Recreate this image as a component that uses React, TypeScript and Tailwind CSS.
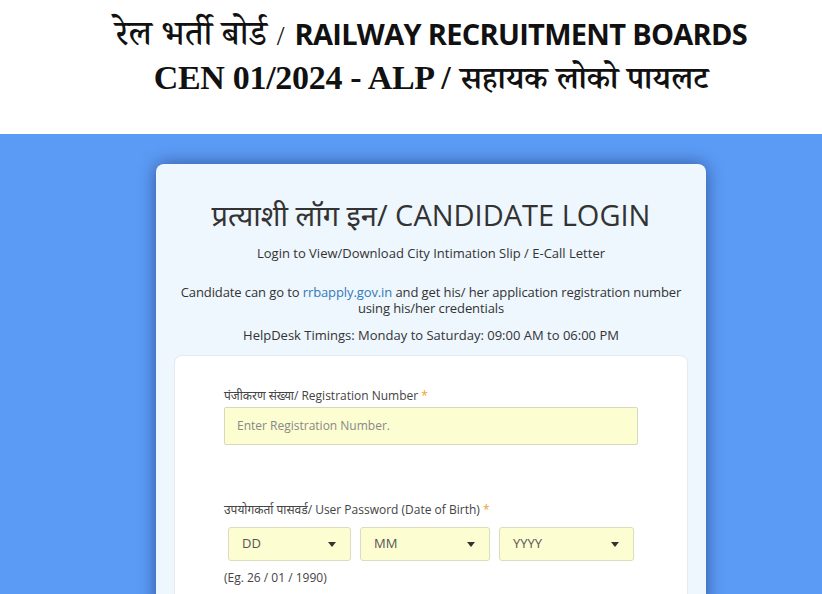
import React from "react";

const sans = "font-['Open_Sans','Noto_Sans','Noto_Sans_Devanagari',sans-serif]";

function Caret() {
  return (
    <svg width="8" height="5" viewBox="0 0 8 5" className="shrink-0">
      <path d="M0 0h8L4 5z" fill="#333" />
    </svg>
  );
}

function DateSelect({ label, width }: { label: string; width: string }) {
  return (
    <div
      className={`flex h-[34px] items-center justify-between rounded-[3px] border border-[#dcdcc0] bg-[#fdfdd2] pl-[13px] pr-[14px] text-[13px] text-[#555] ${width}`}
    >
      <span>{label}</span>
      <Caret />
    </div>
  );
}

export default function App() {
  return (
    <div className={`min-h-[594px] w-full bg-[#5b9bf6] ${sans}`}>
      {/* header banner */}
      <div className="flex h-[134px] flex-col items-center bg-white pl-10 pt-[14px] text-[#111]">
        <div className="flex items-baseline gap-[10px] leading-[40px]">
          <span className="font-['Noto_Serif_Devanagari','Noto_Sans_Devanagari',serif] text-[35px] font-medium">रेल भर्ती बोर्ड</span>
          <span className="font-['Liberation_Serif',serif] text-[28px]">/</span>
          <span className="font-['Open_Sans',sans-serif] text-[29px] font-bold tracking-[-0.7px]">RAILWAY RECRUITMENT BOARDS</span>
        </div>
        <div className="flex items-baseline gap-[10px] leading-[36px]">
          <span className="font-['Liberation_Serif',serif] text-[34px] font-bold tracking-[-0.3px]">CEN 01/2024 - ALP /</span>
          <span className="font-['Noto_Serif_Devanagari','Noto_Sans_Devanagari',serif] text-[32px] font-semibold">सहायक लोको पायलट</span>
        </div>
      </div>

      {/* login area */}
      <div className="flex justify-center pl-10 pt-[30px]">
        <div className="w-[550px] rounded-[8px] bg-[#eef6fe] px-[18px] pt-[29px] shadow-[0_0_18px_rgba(0,0,40,0.45)]">
          <h1 className="text-center text-[29px] leading-[44px] text-[#333]">प्रत्याशी लॉग इन/ CANDIDATE LOGIN</h1>
          <p className="mt-[7px] text-center text-[13px] leading-[18px] text-[#333]">
            Login to View/Download City Intimation Slip / E-Call Letter
          </p>
          <div className="-mx-[6px] mt-[22px] text-center text-[13px] leading-[16px] tracking-[-0.1px] text-[#333]">
            <p>
              Candidate can go to <a className="text-[#337ab7]">rrbapply.gov.in</a> and get his/ her application registration number
            </p>
            <p>using his/her credentials</p>
          </div>
          <p className="mt-[10px] text-center text-[13px] leading-[18px] text-[#333]">
            HelpDesk Timings: Monday to Saturday: 09:00 AM to 06:00 PM
          </p>

          <div className="mt-[11px] h-[260px] rounded-t-[8px] border border-[#e4eaf0] bg-white px-[49px] pt-[31px]">
            <label className="block text-[12px] leading-[18px] text-[#444]">
              पंजीकरण संख्या/ Registration Number <span className="text-[#f0a030]">*</span>
            </label>
            <div className="mt-[2px] flex h-[38px] items-center rounded-[2px] border border-[#d8d8bc] bg-[#fdfdd2] px-[12px] text-[12px] text-[#888]">
              Enter Registration Number.
            </div>

            <label className="mt-[56px] block text-[12px] leading-[18px] text-[#444]">
              उपयोगकर्ता पासवर्ड/ User Password (Date of Birth) <span className="text-[#f0a030]">*</span>
            </label>
            <div className="mt-[8px] flex gap-[9px] pl-[4px]">
              <DateSelect label="DD" width="w-[123px]" />
              <DateSelect label="MM" width="w-[130px]" />
              <DateSelect label="YYYY" width="w-[135px]" />
            </div>
            <p className="mt-[8px] text-[12px] leading-[18px] text-[#444]">(Eg. 26 / 01 / 1990)</p>
          </div>
        </div>
      </div>
    </div>
  );
}
